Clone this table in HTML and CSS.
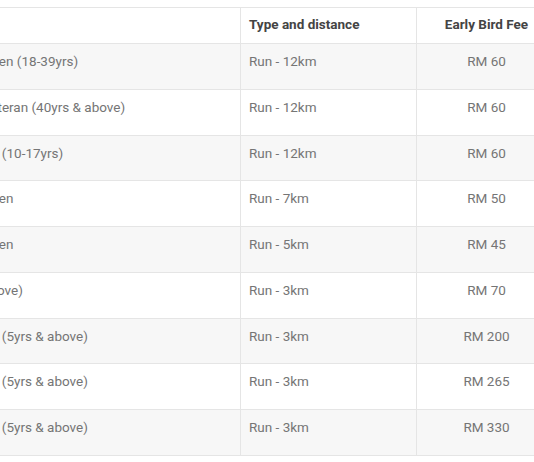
FILE: index.html
```html
<!DOCTYPE html>
<html lang="en">
<head>
<meta charset="utf-8">
<title>Race categories</title>
<link rel="stylesheet" href="styles.css">
</head>
<body>
<div class="page">
  <table class="fees">
    <colgroup>
      <col class="col-cat">
      <col class="col-type">
      <col class="col-fee">
    </colgroup>
    <thead>
      <tr>
        <th class="cat"></th>
        <th class="type">Type and distance</th>
        <th class="fee">Early Bird Fee</th>
      </tr>
    </thead>
    <tbody>
      <tr><td class="cat">Open (18-39yrs)</td><td class="type">Run - 12km</td><td class="fee">RM 60</td></tr>
      <tr><td class="cat">Veteran (40yrs &amp; above)</td><td class="type">Run - 12km</td><td class="fee">RM 60</td></tr>
      <tr><td class="cat">Gr. (10-17yrs)</td><td class="type">Run - 12km</td><td class="fee">RM 60</td></tr>
      <tr><td class="cat">Open</td><td class="type">Run - 7km</td><td class="fee">RM 50</td></tr>
      <tr><td class="cat">Open</td><td class="type">Run - 5km</td><td class="fee">RM 45</td></tr>
      <tr><td class="cat">above)</td><td class="type">Run - 3km</td><td class="fee">RM 70</td></tr>
      <tr><td class="cat">Gr. (5yrs &amp; above)</td><td class="type">Run - 3km</td><td class="fee">RM 200</td></tr>
      <tr><td class="cat">Gr. (5yrs &amp; above)</td><td class="type">Run - 3km</td><td class="fee">RM 265</td></tr>
      <tr><td class="cat">Gr. (5yrs &amp; above)</td><td class="type">Run - 3km</td><td class="fee">RM 330</td></tr>
    </tbody>
  </table>
</div>
</body>
</html>
```
FILE: styles.css
```css
html, body {
  margin: 0;
  padding: 0;
  background: #ffffff;
}

.page {
  width: 534px;
  height: 462px;
  overflow: hidden;
  padding-top: 7px;
  box-sizing: border-box;
  font-family: Roboto, "Liberation Sans", Arial, sans-serif;
  font-size: 13.5px;
}

.fees {
  border-collapse: collapse;
  table-layout: fixed;
  width: 583px;
  margin-left: -27px;
}

.col-cat { width: 267px; }
.col-type { width: 176px; }
.col-fee { width: 140px; }

.fees th,
.fees td {
  border: 1px solid #e5e5e5;
  text-align: left;
  white-space: nowrap;
  overflow: hidden;
}

.fees th {
  padding: 5.4px 8px 6.2px;
  line-height: 23.4px;
  font-weight: 700;
  color: #444444;
  background: #ffffff;
}

.fees td {
  padding: 6px 8px 15.38px;
  line-height: 23.4px;
  color: #757575;
}

.fees tbody tr:nth-child(odd) td {
  background: #f7f7f7;
}

.fees .fee {
  text-align: center;
}
```
